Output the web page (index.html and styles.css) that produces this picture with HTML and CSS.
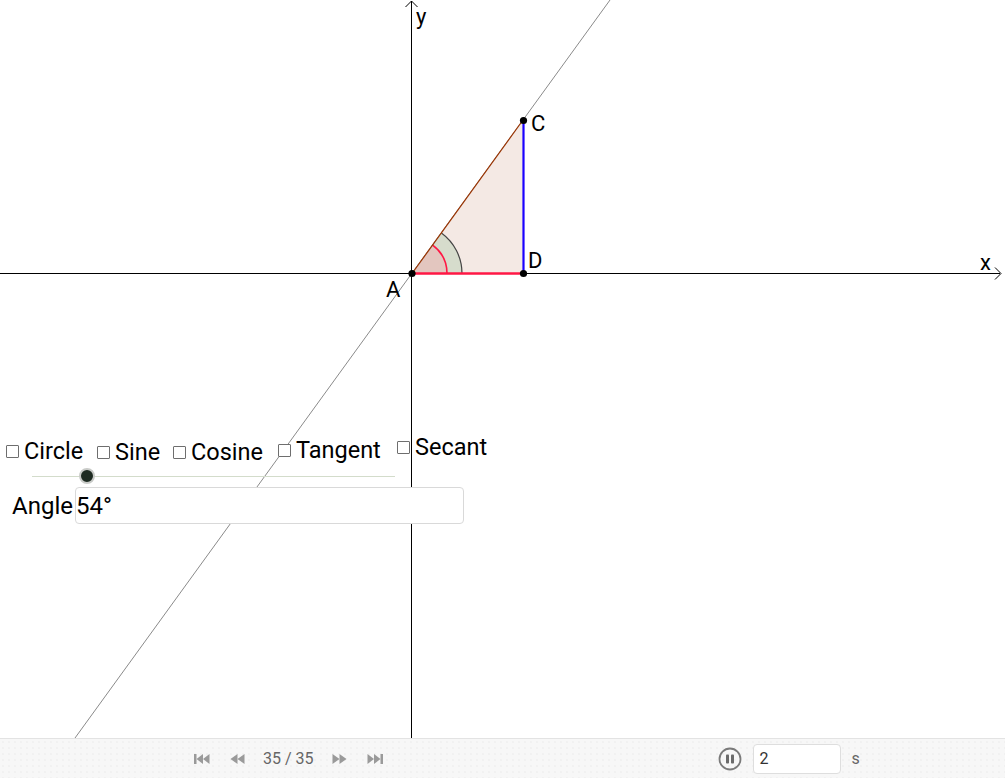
FILE: index.html
```html
<!DOCTYPE html>
<html>
<head>
<meta charset="utf-8">
<link rel="stylesheet" href="styles.css">
</head>
<body>
<div class="app">
  <div class="canvas">
    <svg class="graph" width="1005" height="738" viewBox="0 0 1005 738">
      <!-- axes -->
      <line x1="0" y1="273.5" x2="1000" y2="273.5" stroke="#000" stroke-width="1"/>
      <polyline points="995,267.5 1001,273.5 995,279.5" fill="none" stroke="#000" stroke-width="1"/>
      <line x1="411.5" y1="1" x2="411.5" y2="738" stroke="#000" stroke-width="1"/>
      <polyline points="405.5,7 411.5,1 417.5,7" fill="none" stroke="#000" stroke-width="1"/>
      <!-- long line -->
      <line x1="610" y1="0" x2="75" y2="738" stroke="#8a8a8a" stroke-width="1"/>
      <!-- triangle -->
      <polygon points="412,273.5 523,120 523,273.5" fill="#f4e9e4"/>
      <!-- angle sectors -->
      <path d="M412,273.5 L462,273.5 A50,50 0 0 0 441.4,233.05 Z" fill="#d6dccc"/>
      <path d="M462,273.5 A50,50 0 0 0 441.4,233.05" fill="none" stroke="#444" stroke-width="1.2"/>
      <path d="M412,273.5 L447,273.5 A35,35 0 0 0 432.6,245.2 Z" fill="#e3c6bf"/>
      <path d="M447,273.5 A35,35 0 0 0 432.6,245.2" fill="none" stroke="#ff1744" stroke-width="1.6"/>
      <!-- sides -->
      <line x1="412" y1="273.5" x2="523" y2="120" stroke="#993300" stroke-width="1.2"/>
      <line x1="523.5" y1="120" x2="523.5" y2="273.5" stroke="#1a00ff" stroke-width="2.2"/>
      <line x1="412" y1="273.5" x2="523" y2="273.5" stroke="#ff1744" stroke-width="2.4"/>
      <!-- points -->
      <circle cx="412" cy="273.5" r="3.6" fill="#000"/>
      <circle cx="523.5" cy="120.5" r="3.6" fill="#000"/>
      <circle cx="523.5" cy="273.5" r="3.6" fill="#000"/>
      <!-- labels -->
      <text x="416" y="24" class="lbl">y</text>
      <text x="531" y="131" class="lbl">C</text>
      <text x="528" y="268" class="lbl">D</text>
      <text x="386" y="297" class="lbl">A</text>
      <text x="980" y="270" class="lbl">x</text>
    </svg>

    <div class="checks">
      <label class="chk c-circle"><span class="box"></span>Circle</label>
      <label class="chk c-sine"><span class="box"></span>Sine</label>
      <label class="chk c-cosine"><span class="box"></span>Cosine</label>
      <label class="chk c-tangent"><span class="box"></span>Tangent</label>
      <label class="chk c-secant"><span class="box"></span>Secant</label>
    </div>

    <div class="slider">
      <div class="track"></div>
      <div class="knob"></div>
    </div>

    <div class="anglefield">
      <span class="anglelbl">Angle</span>
      <div class="anglebox">54°</div>
    </div>
  </div>

  <div class="bar">
    <div class="nav">
      <svg class="ico" width="16" height="12" viewBox="0 0 16 12"><rect x="0" y="1" width="2.5" height="10" fill="#9a9a9a"/><polygon points="2.5,6 9,1 9,11" fill="#9a9a9a"/><polygon points="9,6 15.5,1 15.5,11" fill="#9a9a9a"/></svg>
      <svg class="ico" width="15" height="12" viewBox="0 0 15 12"><polygon points="0.5,6 7.5,1 7.5,11" fill="#9a9a9a"/><polygon points="7.5,6 14.5,1 14.5,11" fill="#9a9a9a"/></svg>
      <span class="count">35 / 35</span>
      <svg class="ico" width="15" height="12" viewBox="0 0 15 12"><polygon points="0.5,1 7.5,6 0.5,11" fill="#9a9a9a"/><polygon points="7.5,1 14.5,6 7.5,11" fill="#9a9a9a"/></svg>
      <svg class="ico" width="16" height="12" viewBox="0 0 16 12"><polygon points="0.5,1 7,6 0.5,11" fill="#9a9a9a"/><polygon points="7,1 13.5,6 7,11" fill="#9a9a9a"/><rect x="13.5" y="1" width="2.5" height="10" fill="#9a9a9a"/></svg>
    </div>
    <div class="play">
      <svg class="pause" width="24" height="24" viewBox="0 0 24 24"><circle cx="12" cy="12" r="10.5" fill="none" stroke="#7a7a7a" stroke-width="1.8"/><rect x="8" y="7.5" width="3" height="9" rx="0.8" fill="#6a6a6a"/><rect x="13" y="7.5" width="3" height="9" rx="0.8" fill="#6a6a6a"/></svg>
      <div class="speed">2</div>
      <span class="unit">s</span>
    </div>
  </div>
</div>
</body>
</html>
```

FILE: styles.css
```css
html, body {
  margin: 0;
  padding: 0;
  background: #fff;
  font-family: Roboto, "Liberation Sans", sans-serif;
}

.app {
  width: 1005px;
  height: 778px;
  display: flex;
  flex-direction: column;
  overflow: hidden;
}

.canvas {
  position: relative;
  height: 738px;
  flex: none;
}

.graph {
  position: absolute;
  left: 0;
  top: 0;
}

.lbl {
  font-family: Roboto, "Liberation Sans", sans-serif;
  font-size: 22px;
  fill: #000;
}

.chk {
  position: absolute;
  display: flex;
  align-items: center;
  font-size: 23.5px;
  color: #000;
  line-height: 28px;
}

.box {
  width: 11px;
  height: 11px;
  border: 1px solid #6e6e6e;
  border-radius: 1px;
  margin-right: 5px;
  margin-top: 1px;
  background: #fff;
}

.c-circle { left: 6px; top: 437px; }
.c-sine { left: 97px; top: 438px; }
.c-cosine { left: 173px; top: 438px; }
.c-tangent { left: 278px; top: 436px; }
.c-secant { left: 397px; top: 433px; }

.slider {
  position: absolute;
  left: 32px;
  top: 466px;
  width: 363px;
  height: 20px;
}

.track {
  position: absolute;
  left: 0;
  right: 0;
  top: 9.5px;
  height: 1px;
  background: #d3dccb;
}

.knob {
  position: absolute;
  left: 47px;
  top: 2px;
  width: 12px;
  height: 12px;
  border-radius: 50%;
  background: #1e2b22;
  border: 2.5px solid #c9cbc8;
}

.anglefield {
  position: absolute;
  left: 12px;
  top: 487px;
  display: flex;
  align-items: center;
}

.anglelbl {
  font-size: 24px;
  color: #000;
  width: 63px;
  line-height: 35px;
  padding-top: 2px;
}

.anglebox {
  width: 387px;
  height: 35px;
  border: 1px solid #d9d9d9;
  border-radius: 4px;
  background: #fff;
  font-size: 24px;
  line-height: 37px;
  padding-left: 0;
  color: #000;
  box-sizing: content-box;
}

.bar {
  height: 39px;
  border-top: 1px solid #e3e3e3;
  background-color: #f7f7f7;
  background-image: radial-gradient(circle, #e6e6e6 0.5px, transparent 0.8px);
  background-size: 6px 6px;
  display: flex;
  align-items: center;
  position: relative;
}

.nav {
  display: flex;
  align-items: center;
  margin-left: 194px;
  gap: 20px;
}

.ico {
  display: block;
}

.count {
  font-size: 16px;
  color: #666;
  margin: 0 -2px;
}

.play {
  display: flex;
  align-items: center;
  margin-left: 335px;
}

.pause {
  display: block;
  margin-right: 11px;
}

.speed {
  width: 80px;
  height: 28px;
  border: 1px solid #dedede;
  border-radius: 4px;
  background: #fff;
  font-size: 16px;
  color: #333;
  line-height: 28px;
  padding-left: 6px;
}

.unit {
  margin-left: 11px;
  font-size: 16px;
  color: #666;
}
```
